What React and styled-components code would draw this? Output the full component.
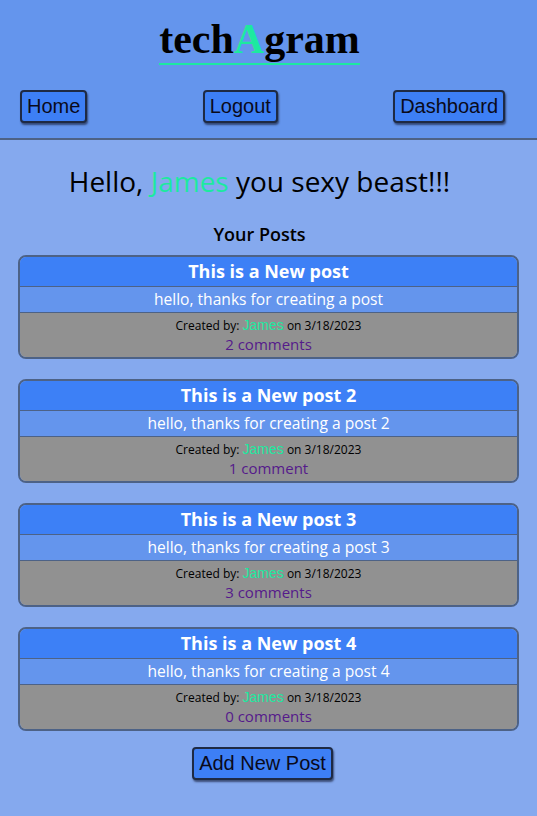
import styled, { createGlobalStyle } from "styled-components";

const GlobalStyle = createGlobalStyle`
  html, body {
    margin: 0;
    padding: 0;
    background-color: #85a9ee;
    font-family: "Open Sans", Lato, sans-serif;
  }
`;

const posts = [
  { title: "This is a New post", body: "hello, thanks for creating a post", comments: "2 comments" },
  { title: "This is a New post 2", body: "hello, thanks for creating a post 2", comments: "1 comment" },
  { title: "This is a New post 3", body: "hello, thanks for creating a post 3", comments: "3 comments" },
  { title: "This is a New post 4", body: "hello, thanks for creating a post 4", comments: "0 comments" },
];

export default function App() {
  return (
    <Page>
      <GlobalStyle />
      <Header>
        <Logo>
          tech<span>A</span>gram
        </Logo>
        <Nav>
          <NavButton>Home</NavButton>
          <NavButton>Logout</NavButton>
          <NavButton>Dashboard</NavButton>
        </Nav>
      </Header>
      <Main>
        <Greeting>
          Hello, <Name>James</Name> you sexy beast!!!
        </Greeting>
        <SectionTitle>Your Posts</SectionTitle>
        <PostList>
          {posts.map((p) => (
            <Post key={p.title}>
              <PostTitle>{p.title}</PostTitle>
              <PostBody>{p.body}</PostBody>
              <PostFooter>
                <Meta>
                  Created by: <Author>James</Author> on 3/18/2023
                </Meta>
                <Comments>{p.comments}</Comments>
              </PostFooter>
            </Post>
          ))}
        </PostList>
        <AddButton>Add New Post</AddButton>
      </Main>
    </Page>
  );
}

const Page = styled.div`
  min-height: 816px;
  background-color: #85a9ee;
`;

const Header = styled.header`
  background-color: #6495ed;
  border-bottom: 2px solid #4d6286;
  height: 140px;
  box-sizing: border-box;
  padding-top: 15px;
`;

const Logo = styled.h1`
  margin: 0 auto;
  width: fit-content;
  position: relative;
  left: -9px;
  font-family: "Liberation Serif", serif;
  font-size: 42px;
  font-weight: 700;
  line-height: 48px;
  color: #000;
  border-bottom: 2px solid #1de9a0;
  span {
    color: #1de9a0;
  }
`;

const Nav = styled.nav`
  display: flex;
  justify-content: space-between;
  padding: 25px 32px 0 20px;
`;

const NavButton = styled.button`
  font-family: "Liberation Sans", Arial, sans-serif;
  font-size: 20px;
  line-height: 23px;
  padding: 3px 5px;
  color: #0a0a1a;
  background-color: #3d7ff5;
  border: 2px solid #1e2a44;
  border-radius: 4px;
  box-shadow: 1px 2px 2px rgba(30, 40, 70, 0.7);
`;

const AddButton = styled(NavButton)`
  margin-right: 12px;
`;

const Main = styled.main`
  display: flex;
  flex-direction: column;
  align-items: center;
  padding: 24px 18px 0 18px;
`;

const Greeting = styled.h2`
  margin: 0;
  padding-right: 18px;
  font-size: 28px;
  font-weight: 400;
  line-height: 34px;
  color: #000;
`;

const Name = styled.span`
  color: #1de9a0;
`;

const SectionTitle = styled.h3`
  margin: 24px 0 9px;
  padding-right: 18px;
  font-size: 18px;
  font-weight: 600;
  line-height: 24px;
  color: #000;
`;

const PostList = styled.div`
  display: flex;
  flex-direction: column;
  gap: 20px;
  width: 100%;
  margin-bottom: 16px;
`;

const Post = styled.article`
  border: 2px solid #4d6286;
  border-radius: 8px;
  overflow: hidden;
  text-align: center;
`;

const PostTitle = styled.div`
  background-color: #3d80f6;
  color: #fff;
  font-size: 18px;
  font-weight: 700;
  line-height: 29px;
  border-bottom: 1px solid #4d6286;
`;

const PostBody = styled.div`
  background-color: #6495ed;
  color: #fff;
  font-size: 15.6px;
  line-height: 25px;
  border-bottom: 1px solid #4d6286;
`;

const PostFooter = styled.div`
  background-color: #919191;
  padding: 4px 0 3px;
`;

const Meta = styled.div`
  font-size: 12px;
  line-height: 16px;
  color: #000;
`;

const Author = styled.span`
  font-family: "Liberation Sans", Arial, sans-serif;
  font-size: 14px;
  color: #1de9a0;
`;

const Comments = styled.div`
  font-size: 15px;
  line-height: 20px;
  color: #551a8b;
`;
